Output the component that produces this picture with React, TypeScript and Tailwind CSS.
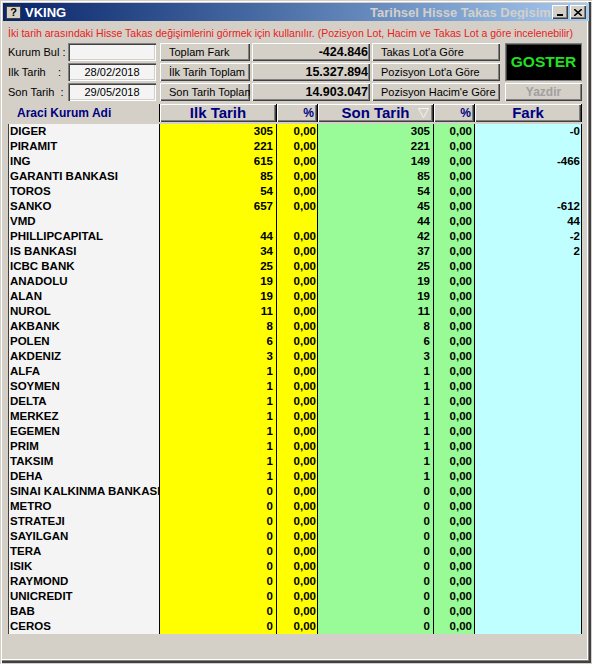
import React from "react";

const data: [string, string, string, string][] = [
  ["DIGER", "305", "305", "-0"],
  ["PIRAMIT", "221", "221", ""],
  ["ING", "615", "149", "-466"],
  ["GARANTI BANKASI", "85", "85", ""],
  ["TOROS", "54", "54", ""],
  ["SANKO", "657", "45", "-612"],
  ["VMD", "", "44", "44"],
  ["PHILLIPCAPITAL", "44", "42", "-2"],
  ["IS BANKASI", "34", "37", "2"],
  ["ICBC BANK", "25", "25", ""],
  ["ANADOLU", "19", "19", ""],
  ["ALAN", "19", "19", ""],
  ["NUROL", "11", "11", ""],
  ["AKBANK", "8", "8", ""],
  ["POLEN", "6", "6", ""],
  ["AKDENIZ", "3", "3", ""],
  ["ALFA", "1", "1", ""],
  ["SOYMEN", "1", "1", ""],
  ["DELTA", "1", "1", ""],
  ["MERKEZ", "1", "1", ""],
  ["EGEMEN", "1", "1", ""],
  ["PRIM", "1", "1", ""],
  ["TAKSIM", "1", "1", ""],
  ["DEHA", "1", "1", ""],
  ["SINAI KALKINMA BANKASI", "0", "0", ""],
  ["METRO", "0", "0", ""],
  ["STRATEJI", "0", "0", ""],
  ["SAYILGAN", "0", "0", ""],
  ["TERA", "0", "0", ""],
  ["ISIK", "0", "0", ""],
  ["RAYMOND", "0", "0", ""],
  ["UNICREDIT", "0", "0", ""],
  ["BAB", "0", "0", ""],
  ["CEROS", "0", "0", ""],
];

const raised =
  "bg-[#d4d0c8] shadow-[inset_1px_1px_0_#ffffff,inset_-1px_-1px_0_#404040,inset_-2px_-2px_0_#808080]";
const sunken =
  "bg-[#f4f4f4] shadow-[inset_1px_1px_0_#808080,inset_2px_2px_0_#404040,inset_-1px_-1px_0_#ffffff,inset_-2px_-2px_0_#d4d0c8]";

function Label({ children }: { children: React.ReactNode }) {
  return <div className="h-[18px] leading-[18px] text-[11px] text-black whitespace-pre">{children}</div>;
}

function TextBtn({ children }: { children: React.ReactNode }) {
  return (
    <div className={`h-[18px] leading-[18px] text-[11px] text-black pl-[9px] whitespace-nowrap overflow-hidden ${raised}`}>
      {children}
    </div>
  );
}

function ValueBox({ children }: { children: React.ReactNode }) {
  return (
    <div className={`h-[18px] leading-[18px] text-[12.5px] font-bold text-black pr-[2px] text-right ${raised}`}>
      {children}
    </div>
  );
}

export default function App() {
  return (
    <div className="w-[592px] h-[664px] bg-[#d4d0c8] relative overflow-hidden font-['Liberation_Sans',Arial,sans-serif] shadow-[inset_1px_1px_0_#d4d0c8,inset_2px_2px_0_#ffffff,inset_-1px_-1px_0_#d4d0c8,inset_-2px_-2px_0_#404040,inset_-3px_-3px_0_#404040,inset_-4px_-4px_0_#808080,inset_-5px_-5px_0_#ffffff] p-[3px] flex flex-col">
      {/* Title bar */}
      <div className="h-[18px] shrink-0 flex items-center bg-linear-to-r from-[#0a246a] to-[#a6caf0]">
        <div className="ml-[3px] w-[15px] h-[13px] bg-[#d4d0c8] border border-[#404040] flex items-center justify-center text-[11px] font-bold text-black leading-none">
          ?
        </div>
        <div className="ml-[4px] text-white font-bold text-[13px] leading-none">VKING</div>
        <div className="flex-1" />
        <div className="w-[182px] overflow-hidden whitespace-nowrap text-[#d4d0c8] font-bold text-[13px] leading-none">
          Tarihsel Hisse Takas Degisimi
        </div>
        <div className={`w-[16px] h-[14px] flex items-end justify-center pb-[3px] ${raised}`}>
          <div className="w-[6px] h-[2px] bg-black" />
        </div>
        <div className={`ml-[2px] mr-[3px] w-[16px] h-[14px] flex items-center justify-center ${raised}`}>
          <svg width="8" height="7" viewBox="0 0 8 7">
            <path d="M0 0L8 7M8 0L0 7" stroke="#000" strokeWidth="1.6" />
          </svg>
        </div>
      </div>

      {/* Client */}
      <div className="flex-1 flex flex-col pl-[5px] pr-[6px]">
        <div className="mt-[5px] h-[14px] leading-[14px] text-[10.5px] text-[#e82020] whitespace-nowrap">
          İki tarih arasındaki Hisse Takas değişimlerini görmek için kullanılır. (Pozisyon Lot, Hacim ve Takas Lot a göre incelenebilir)
        </div>

        {/* Controls */}
        <div className="mt-[3px] flex">
          <div className="w-[60px] flex flex-col gap-[2px]">
            <Label>Kurum Bul :</Label>
            <Label>{"Ilk Tarih    :"}</Label>
            <Label>{"Son Tarih  :"}</Label>
          </div>
          <div className="w-[88px] flex flex-col gap-[2px]">
            <div className={`h-[18px] ${sunken}`} />
            <div className={`h-[18px] leading-[18px] text-[11px] text-center text-black ${sunken}`}>28/02/2018</div>
            <div className={`h-[18px] leading-[18px] text-[11px] text-center text-black ${sunken}`}>29/05/2018</div>
          </div>
          <div className="ml-[4px] w-[90px] flex flex-col gap-[2px]">
            <TextBtn>Toplam Fark</TextBtn>
            <TextBtn>İlk Tarih Toplam</TextBtn>
            <TextBtn>Son Tarih Toplam</TextBtn>
          </div>
          <div className="ml-[2px] w-[118px] flex flex-col gap-[2px]">
            <ValueBox>-424.846</ValueBox>
            <ValueBox>15.327.894</ValueBox>
            <ValueBox>14.903.047</ValueBox>
          </div>
          <div className="ml-[2px] w-[128px] flex flex-col gap-[2px]">
            <TextBtn>Takas Lot&apos;a Göre</TextBtn>
            <TextBtn>Pozisyon Lot&apos;a Göre</TextBtn>
            <TextBtn>Pozisyon Hacim&apos;e Göre</TextBtn>
          </div>
          <div className="ml-[5px] w-[77px] flex flex-col gap-[2px]">
            <div className="h-[38px] bg-black border border-[#808080] shadow-[inset_1px_1px_0_#404040] flex items-center justify-center text-[15.5px] font-bold text-[#20e020]">
              GOSTER
            </div>
            <div className={`h-[18px] leading-[18px] text-[12px] font-bold text-center text-[#a0a0a0] ${raised}`}>
              Yazdir
            </div>
          </div>
        </div>

        {/* Header */}
        <div className="mt-[3px] h-[18px] flex">
          <div className="w-[151px] pl-[9px] text-[12px] font-bold text-[#000080] leading-[18px]">Araci Kurum Adi</div>
          <div className={`w-[117px] border-l border-black text-center text-[15px] font-bold text-[#000080] leading-[18px] ${raised}`}>
            Ilk Tarih
          </div>
          <div className={`w-[41px] border-l border-black text-right pr-[3px] text-[12px] font-bold text-[#000080] leading-[18px] ${raised}`}>
            %
          </div>
          <div className={`w-[116px] border-l border-black relative text-center text-[15px] font-bold text-[#000080] leading-[18px] ${raised}`}>
            Son Tarih
            <svg className="absolute right-[4px] top-[4px]" width="11" height="10" viewBox="0 0 11 10">
              <path d="M0.5 0.5H10.5L5.5 9.5Z" fill="none" stroke="#f4f4f4" strokeWidth="1" />
            </svg>
          </div>
          <div className={`w-[41px] border-l border-black text-right pr-[3px] text-[12px] font-bold text-[#000080] leading-[18px] ${raised}`}>
            %
          </div>
          <div className={`w-[108px] border-l border-r border-black text-center text-[15px] font-bold text-[#000080] leading-[18px] ${raised}`}>
            Fark
          </div>
        </div>

        {/* Body */}
        <div className="mt-[2px] flex text-[11.5px] font-bold text-black leading-[15px]">
          <div className="w-[151px] border-l border-[#404040] bg-[#f4f4f4] flex flex-col">
            {data.map((r) => (
              <div key={r[0]} className="h-[15px] pl-[1px] whitespace-nowrap overflow-hidden">
                {r[0]}
              </div>
            ))}
          </div>
          <div className="w-[117px] border-l border-black bg-[#ffff00] flex flex-col">
            {data.map((r) => (
              <div key={r[0]} className="h-[15px] pr-[3px] text-right">
                {r[1]}
              </div>
            ))}
          </div>
          <div className="w-[41px] border-l border-black bg-[#ffff00] flex flex-col">
            {data.map((r) => (
              <div key={r[0]} className="h-[15px] pr-[1px] text-right">
                {r[1] ? "0,00" : ""}
              </div>
            ))}
          </div>
          <div className="w-[116px] border-l border-black bg-[#98fb98] flex flex-col">
            {data.map((r) => (
              <div key={r[0]} className="h-[15px] pr-[3px] text-right">
                {r[2]}
              </div>
            ))}
          </div>
          <div className="w-[41px] border-l border-black bg-[#98fb98] flex flex-col">
            {data.map((r) => (
              <div key={r[0]} className="h-[15px] pr-[2px] text-right">
                {r[2] ? "0,00" : ""}
              </div>
            ))}
          </div>
          <div className="w-[108px] border-l border-r border-black bg-[#c0ffff] flex flex-col">
            {data.map((r) => (
              <div key={r[0]} className="h-[15px] pr-[1px] text-right">
                {r[3]}
              </div>
            ))}
          </div>
        </div>
      </div>
    </div>
  );
}
